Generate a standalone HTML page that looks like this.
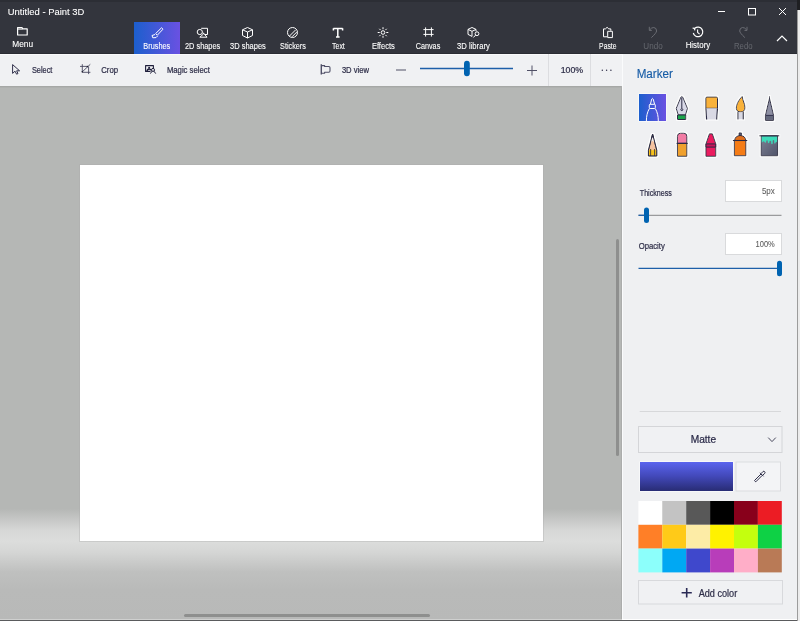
<!DOCTYPE html>
<html><head><meta charset="utf-8">
<style>
*{margin:0;padding:0}
html,body{width:800px;height:621px;overflow:hidden;background:#33353d}
svg{position:absolute;left:0;top:0;display:block;will-change:transform}
text{font-family:"Liberation Sans",sans-serif}
</style></head><body>
<svg width="800" height="621" viewBox="0 0 800 621">
<defs>
<linearGradient id="gTab" x1="0" y1="0" x2="1" y2="0"><stop offset="0" stop-color="#1c5fcd"/><stop offset="1" stop-color="#6a51e2"/></linearGradient>
<linearGradient id="gCv" x1="0" y1="86" x2="0" y2="621" gradientUnits="userSpaceOnUse">
<stop offset="0" stop-color="#b5b7b5"/><stop offset="0.79" stop-color="#b5b7b5"/><stop offset="0.83" stop-color="#d6d7d6"/><stop offset="0.8505" stop-color="#dcdddc"/><stop offset="0.871" stop-color="#d5d6d5"/><stop offset="0.908" stop-color="#bfc0bf"/><stop offset="0.942" stop-color="#b9bab9"/><stop offset="1" stop-color="#b8b9b8"/></linearGradient>
<linearGradient id="gSw" x1="0" y1="0" x2="0" y2="1"><stop offset="0" stop-color="#5a64ee"/><stop offset="0.5" stop-color="#4248b8"/><stop offset="1" stop-color="#282c74"/></linearGradient>
<filter id="halo" x="-20%" y="-20%" width="140%" height="140%"><feMorphology in="SourceAlpha" operator="dilate" radius="0.9" result="d"/><feFlood flood-color="#ffffff" flood-opacity="0.85"/><feComposite in2="d" operator="in" result="w"/><feMerge><feMergeNode in="w"/><feMergeNode in="SourceGraphic"/></feMerge></filter>
<linearGradient id="gBk" x1="0" y1="0" x2="1" y2="1"><stop offset="0" stop-color="#7d8193"/><stop offset="1" stop-color="#50546a"/></linearGradient>
</defs>
<!-- top bar -->
<rect x="0" y="0" width="797" height="54" fill="#33353d"/>
<rect x="0" y="0" width="797" height="2" fill="#2c2e35"/>
<rect x="797" y="0" width="3" height="621" fill="#ececec"/>
<rect x="797" y="0" width="3" height="10" fill="#1e1f22"/>
<rect x="797" y="10" width="1" height="611" fill="#9c9c9c"/>
<g stroke="#fff" stroke-width="1" fill="none">
<line x1="718" y1="11.5" x2="725" y2="11.5"/>
<rect x="748.5" y="8.5" width="7" height="6.5"/>
<path d="M779 8L786 15M786 8L779 15"/>
<path d="M777 41L782 36L787 41" stroke-width="1.2"/>
</g>
<rect x="134" y="22" width="46" height="32" fill="url(#gTab)"/>
<!-- top icons -->
<g stroke="#fff" stroke-width="1" fill="none" stroke-linejoin="round">
<path d="M17.6 35V27.6H22L22.8 28.8H27.2V35Z" stroke-width="1.2"/><path d="M17.6 29.1H22.6" stroke-width="1"/>
<path d="M161.5 27.8L163 29.2L157.3 35.2L155.6 33.6Z"/>
<path d="M155 34.5L152 35.5L152.8 37.8L156 37.6L157.8 35.8"/>
<circle cx="199.8" cy="32" r="2.6"/>
<path d="M201.2 28.3H207.5V34.5H204.8 M203.3 34.2L199.8 37.2H207L203.3 32.8Z"/>
<path d="M247.5 27.5L252.5 29.8V35.5L247.5 38L242.5 35.5V29.8Z M242.5 29.8L247.5 32L252.5 29.8 M247.5 32V38"/>
<circle cx="292.5" cy="32.5" r="5"/>
<path d="M289.5 36L295.5 30 M292 36.8L296.8 32"/>
<path d="M333.4 28.6H342.6 M337.8 28.6V36.9 M336 37.1H339.6 M333.4 28.2V30.6 M342.6 28.2V30.6" stroke-width="1.5"/>
<circle cx="383" cy="32.5" r="1.8"/>
<path d="M383 27.2V29.2 M383 35.8V37.8 M377.7 32.5H379.7 M386.3 32.5H388.3 M379.3 28.8L380.6 30.1 M385.4 34.9L386.7 36.2 M379.3 36.2L380.6 34.9 M385.4 30.1L386.7 28.8"/>
<path d="M425.6 27.4V36.6 M431.4 27.4V36.6 M423.4 29.6H433.6 M423.4 34.4H433.6"/>
<path d="M472 27.5L476 29.4V31.2 M472 27.5L468 29.4V34.4L472 36.4 M468 29.4L472 31.3L476 29.4 M472 31.3V36.4"/>
<circle cx="477" cy="33.7" r="1.9"/><path d="M475.6 35.1L473.4 37.5"/>
<path d="M610.8 30.8V28.9H608.8L607.1 27.3L605.4 28.9H603.5V36.8H607.2 M607.7 31.3H612.4V37.6H607.7Z"/>
<path d="M693.3 33A4.8 4.8 0 1 0 694.8 28.3 M692.6 28.2L694.8 28.3L694.6 30.4" stroke-width="1.2"/><path d="M697.6 29.6V32.3L699.6 34.2" stroke-width="1.1"/>

</g>
<g stroke="#6b6d74" stroke-width="1" fill="none">
<path d="M649.3 26.8V30.4H651.8 M649.6 30Q651.5 27.4 653.8 27.5Q656.6 27.8 656.6 31Q656.4 33 651.4 37.6"/>
<path d="M747.0 26.8V30.4H744.5 M746.7 30Q744.8 27.4 742.5 27.5Q739.7 27.8 739.7 31Q739.9 33 744.9 37.6"/>
</g>
<!-- toolbar 2 -->
<rect x="0" y="54" width="622" height="32" fill="#f0f1f3"/>
<rect x="0" y="53" width="797" height="1" fill="#2a2c33"/><rect x="134" y="53" width="46" height="1" fill="url(#gTab)"/><rect x="0" y="54" width="797" height="1" fill="#f9f9fa"/>
<line x1="548.5" y1="54" x2="548.5" y2="86" stroke="#dcdde0"/>
<line x1="590.5" y1="54" x2="590.5" y2="86" stroke="#dcdde0"/>
<g stroke="#2e2e48" stroke-width="1" fill="none" stroke-linejoin="round">
<path d="M12.6 64.6V73.4L15 71.2L16.6 74.2L18 73.5L16.6 70.8H19.6Z" stroke="#30304a" stroke-width="1"/>
<path d="M80 66.4H87.3 M82.3 64.2V72.3H90.4 M88.6 66.8V74.1 M82.3 71.8L90.3 64.3" stroke="#4a4a60" stroke-width="0.9"/><circle cx="82.3" cy="71.8" r="0.8" fill="#1e1e30" stroke="none"/><circle cx="87.5" cy="66.5" r="0.8" fill="#1e1e30" stroke="none"/>
<path d="M150.5 71.4H145.6V65.6H153.4V68.3" stroke="#1e1e3a" stroke-width="1.1"/><circle cx="149.1" cy="67.7" r="1" fill="#1e1e3a" stroke="none"/><path d="M147 71.2Q147.3 69 149.1 69Q150.5 69 151 70.3" stroke="#1e1e3a" stroke-width="1.3"/>
<circle cx="153" cy="69.9" r="1.5" stroke="#1e1e3a"/>
<path d="M154 71.2L155.7 73.6 M152 71.2L150.4 73.6" stroke="#1e1e3a"/>
<path d="M321.3 64.3V74.4" stroke="#505068" stroke-width="1.4"/><path d="M321.3 65.6H324.6V66.5H328.8Q330 66.5 330 67.7V71Q330 72.2 328.8 72.2H324.6V73.3H321.3" stroke="#505068" stroke-width="1.1"/>
<line x1="396" y1="70" x2="406" y2="70" stroke="#505066"/>
<path d="M527 70.5H537 M532 65.5V75.5" stroke="#505066"/>
</g>
<line x1="420" y1="68.5" x2="513" y2="68.5" stroke="#1d5fa9" stroke-width="1.3"/>
<rect x="464" y="60.8" width="5.8" height="15.4" rx="2.9" fill="#0063b1"/>
<g fill="#2e2e48"><circle cx="602.3" cy="70.3" r="0.7"/><circle cx="606.6" cy="70.3" r="0.7"/><circle cx="610.9" cy="70.3" r="0.7"/></g>
<!-- canvas -->
<rect x="0" y="86" width="622" height="535" fill="url(#gCv)"/>
<rect x="0" y="86" width="621" height="1" fill="#a6a8a6"/><rect x="0" y="87" width="621" height="1" fill="#afb1af"/>
<rect x="79" y="164" width="465" height="378" fill="#a9aaa9" opacity="0.35"/>
<rect x="80" y="165" width="463" height="376" fill="#ffffff"/>
<rect x="616" y="239" width="3" height="217" rx="1.5" fill="#8e8f8e"/>
<rect x="184" y="614" width="246" height="3" rx="1.5" fill="#8e8f8e"/>
<rect x="621" y="86" width="1" height="533" fill="#acadac"/>
<!-- panel -->
<rect x="622" y="54" width="175" height="567" fill="#eff0f2"/>
<rect x="622" y="54" width="1" height="565" fill="#fafbfc"/>
<rect x="0" y="619" width="622" height="1" fill="#cfd0cf"/><rect x="622" y="619" width="175" height="1" fill="#ffffff"/><rect x="0" y="620" width="797" height="1" fill="#5a5b5d"/>
<rect x="725.5" y="180.5" width="56" height="21" fill="#fff" stroke="#d9dadc"/>
<rect x="725.5" y="233.5" width="56" height="21" fill="#fff" stroke="#d9dadc"/>
<line x1="638.5" y1="215.3" x2="781.5" y2="215.3" stroke="#9a9b9d" stroke-width="1.2"/>
<line x1="638.5" y1="215.3" x2="646" y2="215.3" stroke="#1d5fa9" stroke-width="1.3"/>
<rect x="644" y="207.5" width="5" height="15.5" rx="2.5" fill="#0063b1"/>
<line x1="638.5" y1="268.3" x2="779" y2="268.3" stroke="#1d5fa9" stroke-width="1.3"/>
<rect x="777" y="260.8" width="5" height="15.5" rx="2.5" fill="#0063b1"/>
<line x1="639.7" y1="411.5" x2="781" y2="411.5" stroke="#d7d8da"/>
<rect x="638.5" y="426.5" width="143.5" height="26" fill="#f0f1f3" stroke="#d4d5d8"/>
<path d="M768.2 437.6L772 441.6L775.8 437.6" stroke="#4a4a5e" stroke-width="1" fill="none"/>
<rect x="639.5" y="461.5" width="94" height="30" fill="#fff"/>
<rect x="640" y="462" width="93" height="29" fill="url(#gSw)"/>
<rect x="736" y="462" width="44.5" height="29" fill="#f3f4f6" stroke="#dcdde0"/>
<path d="M755 481.3L754.5 480.5L761 474L762.3 475.3L755.8 481.8Z M760 472.8L763.5 476.3 M761.2 473.5L763 471.5A1.3 1.3 0 0 1 764.8 473.3L762.8 475.2" stroke="#2e2e48" stroke-width="1" fill="none" stroke-linejoin="round"/>
<!-- palette -->
<g>
<rect x="638.4" y="501" width="23.9" height="23.8" fill="#ffffff"/>
<rect x="662.3" y="501" width="23.9" height="23.8" fill="#c3c3c3"/>
<rect x="686.2" y="501" width="23.9" height="23.8" fill="#585858"/>
<rect x="710.1" y="501" width="23.9" height="23.8" fill="#000000"/>
<rect x="734" y="501" width="23.9" height="23.8" fill="#88001b"/>
<rect x="757.9" y="501" width="23.9" height="23.8" fill="#ec1c24"/>
<rect x="638.4" y="524.8" width="23.9" height="23.8" fill="#ff7f27"/>
<rect x="662.3" y="524.8" width="23.9" height="23.8" fill="#ffca18"/>
<rect x="686.2" y="524.8" width="23.9" height="23.8" fill="#fdeca6"/>
<rect x="710.1" y="524.8" width="23.9" height="23.8" fill="#fff200"/>
<rect x="734" y="524.8" width="23.9" height="23.8" fill="#c4ff0e"/>
<rect x="757.9" y="524.8" width="23.9" height="23.8" fill="#0ed145"/>
<rect x="638.4" y="548.6" width="23.9" height="23.8" fill="#8cfffb"/>
<rect x="662.3" y="548.6" width="23.9" height="23.8" fill="#00a8f3"/>
<rect x="686.2" y="548.6" width="23.9" height="23.8" fill="#3f48cc"/>
<rect x="710.1" y="548.6" width="23.9" height="23.8" fill="#b83dba"/>
<rect x="734" y="548.6" width="23.9" height="23.8" fill="#ffaec8"/>
<rect x="757.9" y="548.6" width="23.9" height="23.8" fill="#b97a56"/>
</g>
<rect x="638.5" y="580.5" width="144" height="23.5" fill="#f0f1f3" stroke="#d8d9dc"/>
<path d="M681.6 592.8H691.8 M686.7 588V597.6" stroke="#2a2a55" stroke-width="1.6"/>
<text x="7.81" y="15.00" font-size="9.1" fill="#ffffff" stroke="#ffffff" stroke-width="0.08" textLength="76.53" lengthAdjust="spacingAndGlyphs">Untitled - Paint 3D</text>
<text x="12.35" y="47.00" font-size="8.6" fill="#ffffff" stroke="#ffffff" stroke-width="0.1" textLength="20.76" lengthAdjust="spacingAndGlyphs">Menu</text>
<text x="143.35" y="48.90" font-size="8.6" fill="#ffffff" stroke="#ffffff" stroke-width="0.1" textLength="26.91" lengthAdjust="spacingAndGlyphs">Brushes</text>
<text x="184.97" y="48.90" font-size="8.6" fill="#ffffff" stroke="#ffffff" stroke-width="0.1" textLength="35.29" lengthAdjust="spacingAndGlyphs">2D shapes</text>
<text x="230.12" y="48.90" font-size="8.6" fill="#ffffff" stroke="#ffffff" stroke-width="0.1" textLength="35.67" lengthAdjust="spacingAndGlyphs">3D shapes</text>
<text x="280.12" y="48.90" font-size="8.6" fill="#ffffff" stroke="#ffffff" stroke-width="0.1" textLength="25.75" lengthAdjust="spacingAndGlyphs">Stickers</text>
<text x="332.05" y="48.80" font-size="8.6" fill="#ffffff" stroke="#ffffff" stroke-width="0.1" textLength="12.75" lengthAdjust="spacingAndGlyphs">Text</text>
<text x="371.89" y="48.80" font-size="8.6" fill="#ffffff" stroke="#ffffff" stroke-width="0.1" textLength="22.91" lengthAdjust="spacingAndGlyphs">Effects</text>
<text x="415.66" y="48.80" font-size="8.6" fill="#ffffff" stroke="#ffffff" stroke-width="0.1" textLength="24.60" lengthAdjust="spacingAndGlyphs">Canvas</text>
<text x="457.05" y="48.80" font-size="8.6" fill="#ffffff" stroke="#ffffff" stroke-width="0.1" textLength="32.75" lengthAdjust="spacingAndGlyphs">3D library</text>
<text x="599.12" y="48.90" font-size="8.6" fill="#ffffff" stroke="#ffffff" stroke-width="0.1" textLength="17.36" lengthAdjust="spacingAndGlyphs">Paste</text>
<text x="643.35" y="48.90" font-size="8.6" fill="#65676e" stroke="#65676e" stroke-width="0.03" textLength="19.30" lengthAdjust="spacingAndGlyphs">Undo</text>
<text x="685.66" y="47.50" font-size="8.6" fill="#ffffff" stroke="#ffffff" stroke-width="0.1" textLength="24.60" lengthAdjust="spacingAndGlyphs">History</text>
<text x="733.96" y="48.90" font-size="8.6" fill="#65676e" stroke="#65676e" stroke-width="0.03" textLength="18.61" lengthAdjust="spacingAndGlyphs">Redo</text>
<text x="31.89" y="73.10" font-size="8.7" fill="#2e2e48" stroke="#2e2e48" stroke-width="0.22" textLength="20.52" lengthAdjust="spacingAndGlyphs">Select</text>
<text x="101.27" y="73.10" font-size="8.7" fill="#2e2e48" stroke="#2e2e48" stroke-width="0.22" textLength="16.83" lengthAdjust="spacingAndGlyphs">Crop</text>
<text x="166.89" y="73.00" font-size="8.7" fill="#2e2e48" stroke="#2e2e48" stroke-width="0.22" textLength="42.91" lengthAdjust="spacingAndGlyphs">Magic select</text>
<text x="341.89" y="73.10" font-size="8.7" fill="#2e2e48" stroke="#2e2e48" stroke-width="0.22" textLength="27.14" lengthAdjust="spacingAndGlyphs">3D view</text>
<text x="560.66" y="73.40" font-size="9.0" fill="#2e2e48" stroke="#2e2e48" stroke-width="0.22" textLength="22.45" lengthAdjust="spacingAndGlyphs">100%</text>
<text x="636.65" y="77.90" font-size="12.3" fill="#165ca6" stroke="#165ca6" stroke-width="0.14" textLength="36.30" lengthAdjust="spacingAndGlyphs">Marker</text>
<text x="639.82" y="195.60" font-size="9.2" fill="#2e2e48" stroke="#2e2e48" stroke-width="0.22" textLength="31.98" lengthAdjust="spacingAndGlyphs">Thickness</text>
<text x="638.66" y="249.00" font-size="9.2" fill="#2e2e48" stroke="#2e2e48" stroke-width="0.22" textLength="26.14" lengthAdjust="spacingAndGlyphs">Opacity</text>
<text x="761.89" y="193.70" font-size="9.0" fill="#5c5c5c" stroke="#5c5c5c" stroke-width="0.08" textLength="12.91" lengthAdjust="spacingAndGlyphs">5px</text>
<text x="755.58" y="246.70" font-size="9.0" fill="#5c5c5c" stroke="#5c5c5c" stroke-width="0.08" textLength="19.22" lengthAdjust="spacingAndGlyphs">100%</text>
<text x="690.66" y="443.30" font-size="10.2" fill="#2a2a48" stroke="#2a2a48" stroke-width="0.22" textLength="25.45" lengthAdjust="spacingAndGlyphs">Matte</text>
<text x="698.66" y="596.80" font-size="10.2" fill="#2e2e48" stroke="#2e2e48" stroke-width="0.22" textLength="38.52" lengthAdjust="spacingAndGlyphs">Add color</text>
<!-- BRUSHES -->
<g id="brushes">
<rect x="638.5" y="93.5" width="28" height="28" fill="#fff"/>
<rect x="639" y="94" width="27" height="27" fill="url(#gTab)"/>
<g stroke="#fff" stroke-width="1" fill="none" stroke-linejoin="round">
<path d="M650.4 104.3L651.7 99.1Q652.4 97.7 653.2 99.1L654.6 104.3"/>
<rect x="649.3" y="104.3" width="6" height="4.2" rx="0.8"/>
<path d="M649.4 108.5C647.3 112 646.3 116.5 646.4 121 M655.3 108.5C657.4 112 658.4 116.5 658.3 121"/>
</g>
<g stroke="#2b2b45" stroke-width="1" stroke-linejoin="round" filter="url(#halo)">
<path d="M680.8 97.2Q681.8 95.8 682.8 97.2L687.5 108.4L685.5 115H678.2L676.2 108.4Z" fill="#d9d9e7"/>
<line x1="681.8" y1="97.5" x2="681.8" y2="108" fill="none"/>
<circle cx="681.8" cy="109.6" r="1" fill="#d9d9e7"/>
<rect x="677.5" y="115" width="8.3" height="4.5" fill="#1ea54b"/>
<path d="M705.8 98.2Q705.8 97 707 97H716.3Q717.5 97 717.5 98.2V108.3H705.8Z" fill="#f9b23a"/>
<path d="M705.8 108.3L706.6 119.6H716.7L717.5 108.3" fill="#d9d9e4" stroke="none"/><path d="M705.8 108.3L706.6 119.6M716.7 119.6L717.5 108.3" fill="none" stroke-width="1.2"/>
<path d="M706.6 119.6H716.7" stroke="none"/>
<path d="M742.2 96.4C738.6 100 736.2 104.5 736.3 108.3C736.4 110.8 738.3 112 740.6 112C743.2 112 745 110.6 745 107.6C745 103.5 742.6 100.5 742.2 96.4Z" fill="#f9b23a"/>
<rect x="738.4" y="112.3" width="4.4" height="7" fill="#d9d9e4" stroke="none"/>
<path d="M737.9 111.5V119.6M743.3 111.5V119.6" fill="none" stroke-width="1.2"/>
<path d="M769.5 98.2L765.4 115.4V120.4H773.6V115.4Z" fill="#8d8fa3"/><path d="M769.5 96.2V98.5" fill="none" stroke-width="0.9"/>
<path d="M765.4 115.4H773.6" fill="none"/>
<rect x="765.9" y="115.9" width="7.2" height="4" fill="#64677c" stroke="none"/>
<path d="M652.6 134L648.4 150.2V156H656.8V150.2Z" fill="#f3c2a0"/>
<path d="M652.6 134L651.6 138H653.6Z" fill="#2b2b45"/><path d="M651.5 138.5L652.6 137.3L653.7 138.5L654.6 142L652.6 141L650.6 142Z" fill="#f6eee8" stroke="none"/>
<path d="M648.8 150.5L650.6 149L652.6 150.5L654.6 149L656.4 150.5V155.6H648.8Z" fill="#f6c11c" stroke="none"/>
<path d="M650.6 149V156M654.6 149V156" fill="none" stroke-width="0.8"/>
<path d="M652.6 134L648.4 150.2V156H656.8V150.2Z" fill="none"/>
<path d="M677.4 143.4V136.3Q677.4 133.2 680.5 133.2H683.8Q686.9 133.2 686.9 136.3V143.4Z" fill="#f27ca4"/>
<rect x="677.4" y="143.4" width="9.5" height="12.9" fill="#f0a12e"/>
<line x1="676.4" y1="143.4" x2="687.9" y2="143.4" stroke-width="1.1"/>
<path d="M709.4 133.8H712.4L715.8 143.9V156.3H705.9V143.9Z" fill="#ea1d5f"/>
<rect x="705.9" y="143.9" width="9.9" height="3.2" fill="#c8185a"/>
<path d="M739 132.9H741.4V135.5H739Z" fill="#5a607a"/>
<path d="M734.6 140.5C734.6 137.5 737 135.5 740.2 135.5C743.4 135.5 745.8 137.5 745.8 140.5Z" fill="#e0701e"/>
<rect x="734.3" y="140.5" width="11.6" height="15.3" fill="#f57b12"/>
<line x1="732.8" y1="140.5" x2="747.4" y2="140.5" stroke-width="1.1"/>
<rect x="761.2" y="135.8" width="16.4" height="20" fill="url(#gBk)"/>
<path d="M761.7 136.3H777.1V142.5Q776 141 775.5 143Q775 144.5 774.2 142.8V140.5Q773.5 139.5 772.7 140.5V143.5Q772 145 771.2 143.5V141.5Q770.3 140 769.4 141.5V142.5Q768.6 144 767.8 142.2V140.8Q767 139.6 766.2 140.8V142Q765.4 143.5 764.4 141.8Q763.5 140.6 762.5 141.9L761.7 142.8Z" fill="#3ddbb9" stroke="none"/>
<line x1="759.3" y1="135.8" x2="779.3" y2="135.8" stroke-width="1.3"/>
</g>
</g>
</svg>
</body></html>
